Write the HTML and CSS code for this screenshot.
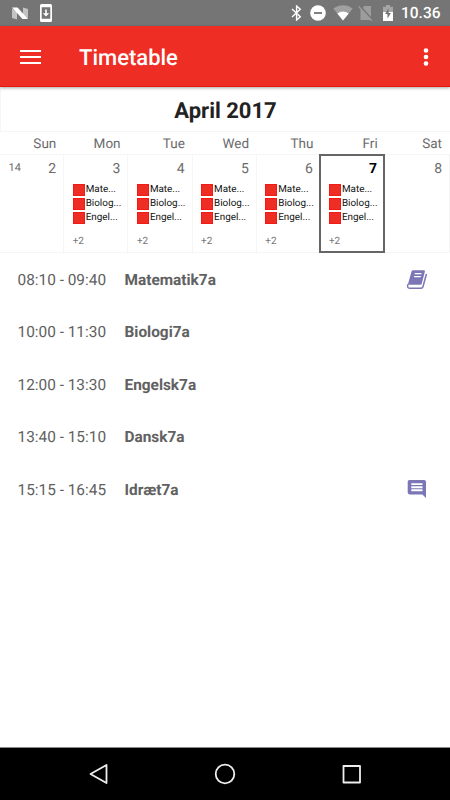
FILE: index.html
```html
<!DOCTYPE html>
<html lang="en">
<head>
    <meta charset="utf-8">
    <title>Timetable</title>
    <link rel="stylesheet" href="styles.css">
</head>
<body>
    <div class="status-bar">
        <svg class="icon-n" width="16" height="13" viewBox="0 0 16 13">
            <path d="M0 1.5L5 5v7.5L0 11zM11 .5l5 1.5v9.5L11 8z" fill="#c4c4c4"/>
            <path d="M0 .5h5.5L16 12h-5.5z" fill="#fff"/>
        </svg>
        <svg class="icon-update" width="12" height="18" viewBox="0 0 12 18">
            <path fill="#fff" fill-rule="evenodd" d="M1.5 0h9A1.5 1.5 0 0 1 12 1.5v15a1.5 1.5 0 0 1-1.5 1.5h-9A1.5 1.5 0 0 1 0 16.5v-15A1.5 1.5 0 0 1 1.5 0zM1.7 3.2v11.6h8.6V3.2z"/>
            <path fill="#fff" d="M5.2 5.5h1.6v3.7h2.4L6 12.5 2.8 9.2h2.4z"/>
        </svg>
        <div class="status-right">
            <svg class="icon-bt" width="11" height="16" viewBox="0 0 11 16" fill="none" stroke="#fff" stroke-width="1.4">
                <path d="M1 4l8.3 7.7L5.6 15V1l3.7 3.3L1 12"/>
            </svg>
            <svg class="icon-dnd" width="16" height="16" viewBox="0 0 16 16">
                <circle cx="8" cy="8" r="7.8" fill="#fff"/>
                <path d="M4 8h8" stroke="#6a6a6a" stroke-width="1.7"/>
            </svg>
            <svg class="icon-wifi" width="20" height="16" viewBox="0 0 20 16">
                <path d="M.3 3.6C6-1 14-1 19.700 3.600L10 15.500z" fill="#a0a0a0"/>
                <path d="M4.300 8.500Q10 4.500 15.700 8.500L10 15.500z" fill="#fff"/>
            </svg>
            <svg class="icon-sim" width="16" height="16" viewBox="0 0 16 16">
                <path d="M6.500 1H13v14H2.500V5z" fill="#9d9d9d"/>
                <path d="M1.800 1L15 15.600" stroke="#757575" stroke-width="2"/>
                <path d="M.7 1.500L14 16" stroke="#9d9d9d" stroke-width="1.300"/>
            </svg>
            <svg class="icon-battery" width="10" height="16" viewBox="0 0 10 16">
                <path d="M3 0h4v1.800h3V7H0V1.800h3z" fill="#a5a5a5"/>
                <path d="M0 7h10v9H0z" fill="#fff"/>
                <path d="M5.600 3.300v4.800h2.300L4.500 13.500V9H2.100z" fill="#707070"/>
            </svg>
            <span class="clock">10.36</span>
        </div>
    </div>

    <div class="app-bar">
        <svg width="21" height="16" viewBox="0 0 21 16">
            <path d="M0 2h21M0 8h21M0 14h21" stroke="#fff" stroke-width="2"/>
        </svg>
        <h1>Timetable</h1>
        <svg class="more" width="6" height="20" viewBox="0 0 6 20" fill="#fff">
            <circle cx="3" cy="3.500" r="2.300"/>
            <circle cx="3" cy="10" r="2.300"/>
            <circle cx="3" cy="16.500" r="2.300"/>
        </svg>
    </div>

    <div class="calendar">
        <div class="month">April 2017</div>
        <div class="weekdays">
            <span>Sun</span><span>Mon</span><span>Tue</span><span>Wed</span><span>Thu</span><span>Fri</span><span>Sat</span>
        </div>
        <div class="week">
            <div class="day">
                <div class="day-top"><span class="week-no">14</span><span>2</span></div>
            </div>
            <div class="day">
                <div class="day-top"><span>3</span></div>
                <div class="event">Mate...</div>
                <div class="event">Biolog...</div>
                <div class="event">Engel...</div>
                <div class="extra">+2</div>
            </div>
            <div class="day">
                <div class="day-top"><span>4</span></div>
                <div class="event">Mate...</div>
                <div class="event">Biolog...</div>
                <div class="event">Engel...</div>
                <div class="extra">+2</div>
            </div>
            <div class="day">
                <div class="day-top"><span>5</span></div>
                <div class="event">Mate...</div>
                <div class="event">Biolog...</div>
                <div class="event">Engel...</div>
                <div class="extra">+2</div>
            </div>
            <div class="day">
                <div class="day-top"><span>6</span></div>
                <div class="event">Mate...</div>
                <div class="event">Biolog...</div>
                <div class="event">Engel...</div>
                <div class="extra">+2</div>
            </div>
            <div class="day selected">
                <div class="day-top"><span>7</span></div>
                <div class="event">Mate...</div>
                <div class="event">Biolog...</div>
                <div class="event">Engel...</div>
                <div class="extra">+2</div>
            </div>
            <div class="day">
                <div class="day-top"><span>8</span></div>
            </div>
        </div>
    </div>

    <div class="lessons">
        <div class="lesson">
            <span class="time">08:10 - 09:40</span>
            <span class="subject">Matematik7a</span>
            <svg width="22" height="22" viewBox="0 0 22 22">
                <path d="M7.300 1.300h10.500q1.400 0 1.100 1.200L15.800 14.500q-.3 1.200-1.500 1.200H1.800L5.500 2.600q.4-1.300 1.800-1.300z" fill="#7b76b5"/>
                <path d="M8.700 4.700h6.800M8 7.600h6.800" stroke="#fff" stroke-width="1.300"/>
                <path d="M1.900 15.200q-1.100 4 1.700 4h11.300q1.700 0 2.100-1.500L20.400 5" fill="none" stroke="#7b76b5" stroke-width="1.500"/>
            </svg>
        </div>
        <div class="lesson">
            <span class="time">10:00 - 11:30</span>
            <span class="subject">Biologi7a</span>
        </div>
        <div class="lesson">
            <span class="time">12:00 - 13:30</span>
            <span class="subject">Engelsk7a</span>
        </div>
        <div class="lesson">
            <span class="time">13:40 - 15:10</span>
            <span class="subject">Dansk7a</span>
        </div>
        <div class="lesson">
            <span class="time">15:15 - 16:45</span>
            <span class="subject">Idræt7a</span>
            <svg width="22" height="22" viewBox="0 0 22 22">
                <path d="M3.500 1h14.700q1.800 0 1.800 1.800V19l-3.600-3.600H3.500Q1.700 15.400 1.700 13.600V2.800Q1.700 1 3.500 1z" fill="#7b76b5"/>
                <path d="M5.300 5.100h11.200M5.300 8.200h11.200M5.300 11.300h11.200" stroke="#fff" stroke-width="1.900"/>
            </svg>
        </div>
    </div>

    <div class="nav-bar">
        <svg width="24" height="24" viewBox="0 0 24 24"><path d="M19.500 3v18L3.500 12z"/></svg>
        <svg width="24" height="24" viewBox="0 0 24 24"><circle cx="12" cy="12" r="9.300"/></svg>
        <svg width="24" height="24" viewBox="0 0 24 24"><path d="M4.500 4h16.500v16.500H4.500z"/></svg>
    </div>
</body>
</html>
```
FILE: styles.css
```css
:root {
    --red: #ee2e24;
    --line: #f5f5f5;
    --grey: #6b6b6b;
}

*,
*::before {
    box-sizing: border-box;
}

body {
    width: 450px;
    height: 800px;
    margin: 0;
    display: flex;
    flex-direction: column;
    overflow: hidden;
    background: #fff;
    font-family: Roboto, "Liberation Sans", sans-serif;
    text-rendering: geometricPrecision;
}

svg {
    display: block;
    flex: none;
}

/* Status bar */
.status-bar {
    height: 26px;
    flex: none;
    display: flex;
    align-items: center;
    padding: 0 10px 0 12px;
    background: #757575;
}

.icon-update {
    margin-left: 12px;
}

.status-right {
    margin-left: auto;
    display: flex;
    align-items: center;
}

.icon-dnd {
    margin-left: 8px;
}

.icon-wifi {
    margin-left: 7px;
}

.icon-sim {
    margin-left: 5px;
}

.icon-battery {
    margin-left: 9px;
}

.clock {
    width: 39px;
    margin-left: 8px;
    color: #fff;
    font-size: 15.5px;
    font-weight: 500;
    line-height: 30px;
}

/* Header */
.app-bar {
    height: 61px;
    flex: none;
    display: flex;
    align-items: center;
    padding: 1px 21px 0 20px;
    background: var(--red);
    border-bottom: 1px solid #e5160c;
    box-shadow: 0 1px 3px rgba(0, 0, 0, 0.35);
    position: relative;
}

.app-bar h1 {
    margin: 4px 0 0 38px;
    color: #fff;
    font-size: 22px;
    font-weight: 500;
}

.more {
    margin-left: auto;
}

/* Calendar */
.calendar {
    margin-top: 1px;
}

.month {
    height: 43px;
    line-height: 48px;
    text-align: center;
    font-size: 22px;
    font-weight: 700;
    color: #222;
    border-left: 1px solid var(--line);
}

.weekdays {
    height: 23px;
    display: flex;
    border-top: 1px solid var(--line);
    color: var(--grey);
    font-size: 13.5px;
    line-height: 24px;
}

.weekdays span {
    flex: 1;
    padding-right: 8px;
    text-align: right;
}

.week {
    height: 99px;
    display: flex;
    border-top: 1px solid var(--line);
    border-bottom: 1px solid var(--line);
}

.day {
    flex: 0 0 64.2px;
    min-width: 0;
    padding-left: 8.5px;
    border-right: 1px solid var(--line);
}

.day:last-child {
    flex: 1;
}

.day-top {
    height: 28px;
    display: flex;
    justify-content: flex-end;
    padding-right: 7px;
    color: var(--grey);
    font-size: 14px;
    line-height: 29px;
}

.week-no {
    margin-right: auto;
    font-size: 11px;
    line-height: 26px;
}

.event {
    height: 14px;
    display: flex;
    align-items: center;
    color: #111;
    font-size: 9.9px;
    line-height: 14px;
    white-space: nowrap;
}

.event::before {
    content: "";
    width: 12px;
    height: 12px;
    margin-right: 1px;
    flex: none;
    background: var(--red);
    border: 1px solid #f21b14;
}

.extra {
    margin-top: 11px;
    color: #777;
    font-size: 10px;
    line-height: 12px;
}

.selected {
    margin: -1px 0 -1px -2px;
    padding-left: 8px;
    flex: 0 0 66px;
    border: 2px solid #666;
}

.selected .day-top {
    height: 27px;
    padding-right: 6px;
    color: #000;
    font-weight: 700;
    line-height: 27px;
}

/* Lesson list */
.lessons {
    flex: 1;
}

.lesson {
    height: 52.5px;
    display: flex;
    align-items: center;
    padding: 1px 22px 0 17.5px;
    color: #616161;
    font-size: 15.4px;
}

.time {
    width: 107px;
}

.subject {
    font-weight: 700;
}

.lesson svg {
    margin-left: auto;
}

/* Navigation buttons */
.nav-bar {
    height: 53px;
    flex: none;
    display: flex;
    align-items: center;
    justify-content: space-between;
    padding: 0 87px;
    background: #000;
    border-top: 1px solid #888;
}

.nav-bar svg {
    fill: none;
    stroke: #eee;
    stroke-width: 1.8;
    stroke-linejoin: round;
}
```
